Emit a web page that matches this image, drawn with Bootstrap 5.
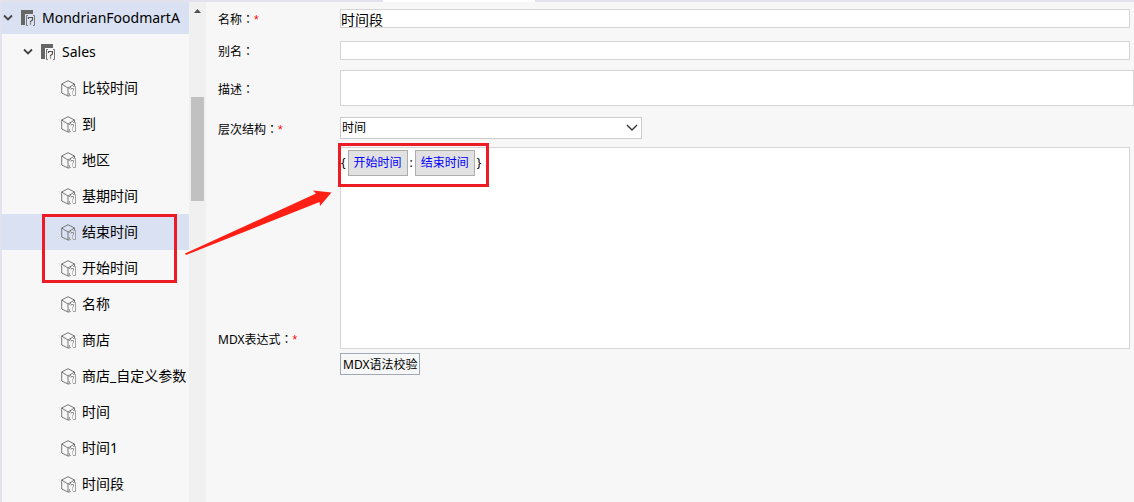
<!DOCTYPE html>
<html lang="zh-CN">
<head>
<meta charset="utf-8">
<meta name="viewport" content="width=device-width, initial-scale=1">
<title>时间段</title>
<link rel="stylesheet" href="https://cdn.jsdelivr.net/npm/bootstrap@5.3.0/dist/css/bootstrap.min.css">
<style>
body{font:12px/16px "Noto Sans","Noto Sans CJK SC",sans-serif;color:#000;background:#f7f7f7}
.topline{height:2px;background:#e2e1ee}
.topline-left{width:383px}
.topline-tab{width:152px;background:#fff}
.side{width:206px;border-left:2px solid #e2e1ee}
.tree{font-size:14px;line-height:20px}
.tree a{height:36px;color:#000;text-decoration:none;white-space:nowrap}
.tree a.root{height:32px;padding-left:1px}
.tree a.cubefile{padding-left:21px}
.tree a.leaf{padding-left:59px}
.tree a.on{background:#d9e1f2}
.tree svg{flex:none}
.chev{margin-right:8px}
.icon{margin-right:5px}
.track{width:17px;background:#f0f0f0;padding:7px 2px 0}
.thumb{height:104px;margin-top:84px;background:#c1c1c1}
.formarea{padding:7px 4px 0 12px}
.lab{width:122px;flex:none;padding-top:2px}
.lab .colon{font-family:"Noto Sans CJK TC",sans-serif}
.lab .star{color:#f00;font-family:"Liberation Sans",sans-serif}
.box{border:1px solid #d4d4d4;border-radius:0;background-color:#fff;color:#000;padding:0;font-size:14px;line-height:17px;min-height:0}
.line-in{height:19px}
.area-in{height:36px;margin-right:-4px;resize:none}
.select-wrap{width:302px}
.pick{height:22px;font-size:12px;line-height:20px;padding:0 24px 0 1px;border-color:#ccc;appearance:none;background-image:none}
.pick-arrow{right:4px;top:7px;pointer-events:none}
.editor{height:202px;border:1px solid #d4d4d4;background:#fff;padding:2px 0}
.expr{gap:2px}
.token{height:26px;padding:0 5px;border:1px solid #adadad;background:#e1e1e1;color:#00f;line-height:16px}
.check{height:22px;padding:1px 2px 0;border:1px solid #a0a9b8;background:#f7f7f7;color:#000;line-height:16px;margin-top:4px}
.mdx-label{padding-bottom:27px}
.gap-a{margin-bottom:13px}.gap-b{margin-bottom:10px}.gap-c{margin-bottom:11px}.gap-d{margin-bottom:8px}
.notes{left:0;top:0;pointer-events:none}
</style>
</head>
<body class="position-relative vh-100 overflow-hidden d-flex flex-column">
<svg width="0" height="0" class="position-absolute" aria-hidden="true">
<symbol id="down" viewBox="0 0 10 8"><path d="M1 1.500 5 5.500 9 1.500" fill="none" stroke="#444" stroke-width="1.800"/></symbol>
<symbol id="file" viewBox="0 0 16 17"><path d="M0 0H12V4H4V15H0Z" fill="#666"/><path d="M7 5.500H5.500V15.500H7M12 5.500H13.500V15.500H12" fill="none" stroke="#777"/><path d="M7.500 9V7.500H11.500V10L9.500 11.500V12.500M9.500 13.300V14.500" fill="none" stroke="#555" stroke-width="1.200"/></symbol>
<symbol id="cube" viewBox="0 0 16 17"><path d="M13.500 6V4L7 .7 .7 4V13L7 16V8L.7 4M7 8 13.500 4M7 16H8.500" fill="none" stroke="#777"/><path d="M10 7.500H8.500V9M8.500 13V15.500H10M12 6.500H14.500V15.500H12" fill="none" stroke="#a0a0a0"/><path d="M10 9.500V8.500H12.500V10.500L11.500 11.500V12.500M11.500 13.500V14.500" fill="none" stroke="#909090"/></symbol>
</svg>
<div class="topline d-flex flex-shrink-0"><div class="topline-left"></div><div class="topline-tab"></div></div>
<div class="d-flex flex-grow-1 overflow-hidden">
<aside class="side d-flex flex-shrink-0">
<nav class="tree flex-grow-1 overflow-hidden">
<a href="#" class="root on d-flex align-items-center"><svg class="chev" width="10" height="8"><use href="#down"/></svg><svg class="icon" width="16" height="17"><use href="#file"/></svg>MondrianFoodmartA</a>
<a href="#" class="cubefile d-flex align-items-center"><svg class="chev" width="10" height="8"><use href="#down"/></svg><svg class="icon" width="16" height="17"><use href="#file"/></svg>Sales</a>
<a href="#" class="leaf d-flex align-items-center"><svg class="icon" width="16" height="17"><use href="#cube"/></svg>比较时间</a>
<a href="#" class="leaf d-flex align-items-center"><svg class="icon" width="16" height="17"><use href="#cube"/></svg>到</a>
<a href="#" class="leaf d-flex align-items-center"><svg class="icon" width="16" height="17"><use href="#cube"/></svg>地区</a>
<a href="#" class="leaf d-flex align-items-center"><svg class="icon" width="16" height="17"><use href="#cube"/></svg>基期时间</a>
<a href="#" class="leaf on d-flex align-items-center"><svg class="icon" width="16" height="17"><use href="#cube"/></svg>结束时间</a>
<a href="#" class="leaf d-flex align-items-center"><svg class="icon" width="16" height="17"><use href="#cube"/></svg>开始时间</a>
<a href="#" class="leaf d-flex align-items-center"><svg class="icon" width="16" height="17"><use href="#cube"/></svg>名称</a>
<a href="#" class="leaf d-flex align-items-center"><svg class="icon" width="16" height="17"><use href="#cube"/></svg>商店</a>
<a href="#" class="leaf d-flex align-items-center"><svg class="icon" width="16" height="17"><use href="#cube"/></svg>商店_自定义参数</a>
<a href="#" class="leaf d-flex align-items-center"><svg class="icon" width="16" height="17"><use href="#cube"/></svg>时间</a>
<a href="#" class="leaf d-flex align-items-center"><svg class="icon" width="16" height="17"><use href="#cube"/></svg>时间1</a>
<a href="#" class="leaf d-flex align-items-center"><svg class="icon" width="16" height="17"><use href="#cube"/></svg>时间段</a>
</nav>
<div class="track flex-shrink-0" aria-hidden="true"><svg class="d-block mx-auto" width="7" height="4"><path d="M0 4 3.500 0 7 4Z" fill="#505050"/></svg><div class="thumb"></div></div>
</aside>
<form class="formarea flex-grow-1">
<div class="d-flex align-items-center gap-a"><label class="lab" for="name">名称<span class="colon" lang="zh-TW">：</span><span class="star">*</span></label><input id="name" class="box line-in flex-grow-1" type="text" value="时间段"></div>
<div class="d-flex align-items-center gap-b"><label class="lab" for="alias">别名<span class="colon" lang="zh-TW">：</span></label><input id="alias" class="box line-in flex-grow-1" type="text"></div>
<div class="d-flex align-items-center gap-c"><label class="lab" for="desc">描述<span class="colon" lang="zh-TW">：</span></label><textarea id="desc" class="box area-in flex-grow-1"></textarea></div>
<div class="d-flex align-items-center gap-d"><label class="lab" for="hier">层次结构<span class="colon" lang="zh-TW">：</span><span class="star">*</span></label>
<div class="select-wrap position-relative"><select id="hier" class="box pick d-block w-100"><option>时间</option></select><svg class="pick-arrow position-absolute" width="12" height="8"><path d="M1 1 6 6 11 1" fill="none" stroke="#333" stroke-width="1.400"/></svg></div></div>
<div class="d-flex align-items-end"><span id="mdx-label" class="lab mdx-label">MDX表达式<span class="colon" lang="zh-TW">：</span><span class="star">*</span></span>
<div class="flex-grow-1"><div class="editor" role="group" aria-labelledby="mdx-label"><div class="expr d-flex align-items-center"><span>{</span><button type="button" class="token">开始时间</button><span>:</span><button type="button" class="token">结束时间</button><span>}</span></div></div>
<button type="button" class="check d-block">MDX语法校验</button></div></div>
</form>
</div>
<svg class="notes position-absolute" width="500" height="300" aria-hidden="true"><g fill="none" stroke="#ed1c24" stroke-width="3"><rect x="43.500" y="215.500" width="132" height="66"/><rect x="339.500" y="144.500" width="148" height="41"/></g><path d="M185 253.500 316 193.500 313 190.500 331.500 192.500 320 206 319.500 202 186 255Z" fill="#ff1f14"/></svg>
<script src="https://cdn.jsdelivr.net/npm/bootstrap@5.3.0/dist/js/bootstrap.bundle.min.js"></script>
</body>
</html>
